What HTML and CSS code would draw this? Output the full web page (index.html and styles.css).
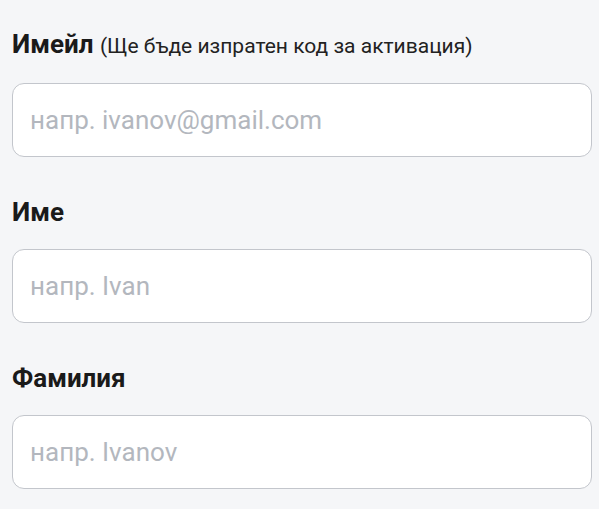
FILE: index.html
```html
<!DOCTYPE html>
<html lang="bg">
<head>
    <meta charset="UTF-8">
    <meta name="viewport" content="width=device-width, initial-scale=1.0">
    <title>Регистрация</title>
    <link rel="stylesheet" href="styles.css">
</head>
<body>

    <form class="signup">
        <div class="field">
            <label for="email">Имейл <span class="hint">(Ще бъде изпратен код за активация)</span></label>
            <input type="email" id="email" placeholder="напр. ivanov@gmail.com">
        </div>

        <div class="field">
            <label for="first">Име</label>
            <input type="text" id="first" placeholder="напр. Ivan">
        </div>

        <div class="field">
            <label for="last">Фамилия</label>
            <input type="text" id="last" placeholder="напр. Ivanov">
        </div>
    </form>

</body>
</html>
```

FILE: styles.css
```css
body {
    font-family: 'Roboto', 'Liberation Sans', sans-serif;
    background-color: #f5f6f8;
    color: #1a1a1a;
    margin: 0;
    padding: 0;
}
.signup {
    width: 580px;
    padding: 29px 0 0 12px;
}
.field {
    margin-bottom: 40px;
}
label {
    display: block;
    font-size: 26px;
    font-weight: 700;
    line-height: 30px;
    margin-bottom: 22px;
}
.hint {
    font-size: 21px;
    font-weight: 400;
    color: #222;
}
input {
    display: block;
    box-sizing: border-box;
    width: 100%;
    height: 74px;
    padding: 0 17px;
    border: 1px solid #c3c6cc;
    border-radius: 12px;
    background-color: #fff;
    font-family: inherit;
    font-size: 26px;
    color: #222;
}
input::placeholder {
    color: #b3b7be;
}
```
